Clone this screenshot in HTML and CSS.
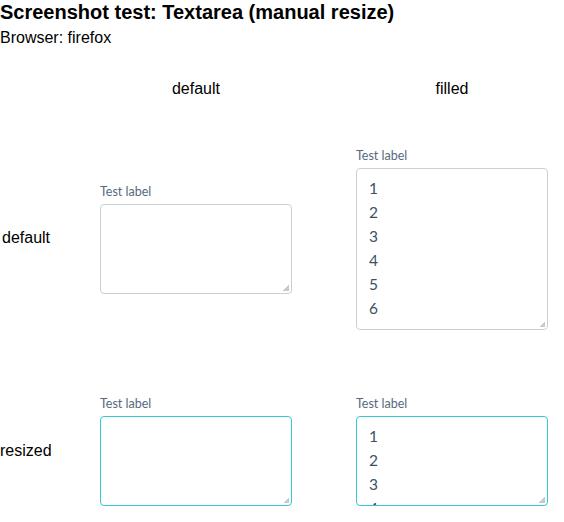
FILE: index.html
```html
<!DOCTYPE html>
<html>
<head>
<meta charset="utf-8">
<link rel="stylesheet" href="styles.css">
</head>
<body>
<h1 class="title">Screenshot test: Textarea (manual resize)</h1>
<p class="browser">Browser: firefox</p>
<div class="grid">
  <div class="corner"></div>
  <div class="colhead">default</div>
  <div class="colhead">filled</div>

  <div class="rowhead">default</div>
  <div class="cell">
    <label class="field">
      <span class="label">Test label</span>
      <textarea class="ta ta-short"></textarea>
    </label>
  </div>
  <div class="cell">
    <label class="field">
      <span class="label">Test label</span>
      <textarea class="ta ta-tall">1
2
3
4
5
6</textarea>
    </label>
  </div>

  <div class="rowhead rowhead-r">resized</div>
  <div class="cell">
    <label class="field">
      <span class="label">Test label</span>
      <textarea class="ta ta-short ta-resized"></textarea>
    </label>
  </div>
  <div class="cell">
    <label class="field">
      <span class="label">Test label</span>
      <textarea class="ta ta-short ta-resized">1
2
3
4
5
6</textarea>
    </label>
  </div>
</div>
</body>
</html>
```

FILE: styles.css
```css
html, body {
  margin: 0;
  padding: 0;
  background: #ffffff;
}
body {
  font-family: "Liberation Sans", Arial, sans-serif;
  font-size: 16px;
  color: #000;
  width: 564px;
  overflow: hidden;
}
.title {
  margin: 0;
  font-size: 20px;
  line-height: 24px;
  font-weight: bold;
}
.browser {
  margin: 5px 0 0;
  font-size: 16px;
  line-height: 18px;
}
.grid {
  display: grid;
  grid-template-columns: 68px 256px 256px;
  align-items: center;
}
.colhead {
  text-align: center;
  line-height: 18px;
  padding: 33px 0 16px;
}
.rowhead {
  padding-left: 2px;
  line-height: 18px;
}
.rowhead-r {
  padding-left: 0;
  padding-top: 2px;
}
.cell {
  padding: 32px;
}
.field {
  display: flex;
  flex-direction: column;
  width: 192px;
}
.label {
  font-family: Lato, "Noto Sans", sans-serif;
  font-size: 12.5px;
  line-height: 18px;
  color: #56697e;
  padding-top: 1px;
  margin-bottom: 3px;
}
.ta {
  display: block;
  box-sizing: border-box;
  width: 192px;
  margin: 0;
  padding: 7px 12px 9px;
  border: 1px solid #c6d0d9;
  border-radius: 4px;
  font-family: Lato, "Noto Sans", sans-serif;
  font-size: 15.5px;
  line-height: 24px;
  color: #3b5166;
  background-color: #fff;
  background-image: linear-gradient(135deg, transparent 50%, #c9c9c9 50%);
  background-size: 6px 6px;
  background-position: right 2px bottom 2px;
  background-repeat: no-repeat;
  overflow: hidden;
  resize: none;
  outline: none;
}
.ta-short {
  height: 90px;
}
.ta-tall {
  height: 162px;
}
.ta-resized {
  border-color: #33c9d4;
}
```
